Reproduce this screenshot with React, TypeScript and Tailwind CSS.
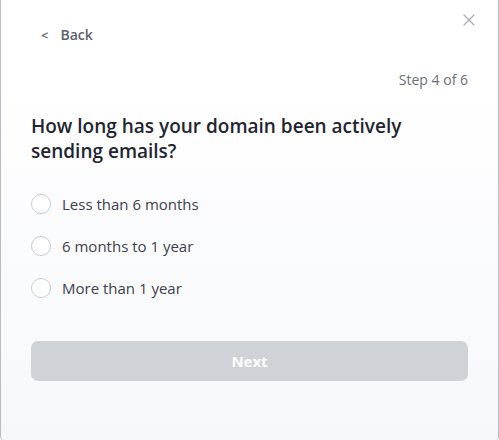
import { X } from "lucide-react";

const options = ["Less than 6 months", "6 months to 1 year", "More than 1 year"];

export default function App() {
  return (
    <div
      className="relative h-[440px] w-[499px] overflow-hidden rounded-b-[4px] border-x border-[#b9bcc2] bg-gradient-to-b from-white from-[18%] to-[#f7f8fc] text-[#1f2937]"
      style={{ fontFamily: "'Open Sans', Lato, sans-serif" }}
    >
      <button className="absolute right-[19px] top-[10px] text-[#a3a7ae]">
        <X size={20} strokeWidth={1.3} />
      </button>

      <div className="flex flex-col px-[30px]">
        <button className="mt-[25px] flex items-center gap-[12px] pl-[10px] text-[14px] font-semibold leading-[20px] text-[#5b616b]">
          <span className="text-[13px]">&lt;</span>
          <span>Back</span>
        </button>

        <p className="mt-[25px] text-right text-[14px] leading-[20px] text-[#6b7079]">Step 4 of 6</p>

        <h1 className="mt-[24px] text-[19px] font-semibold leading-[25px] text-[#1f2630]">
          How long has your domain been actively
          <br />
          sending emails?
        </h1>

        <div className="mt-[30px] flex flex-col gap-[22px]">
          {options.map((option) => (
            <label key={option} className="flex items-center gap-[11px]">
              <span className="h-[20px] w-[20px] rounded-full border-[1.5px] border-[#c9cbd0] bg-white" />
              <span className="text-[15px] leading-[20px] text-[#3b414b]">{option}</span>
            </label>
          ))}
        </div>

        <button className="mt-[43px] h-[40px] w-full rounded-[7px] bg-[#cfd2d6] text-[15px] font-bold text-white">
          Next
        </button>
      </div>
    </div>
  );
}
